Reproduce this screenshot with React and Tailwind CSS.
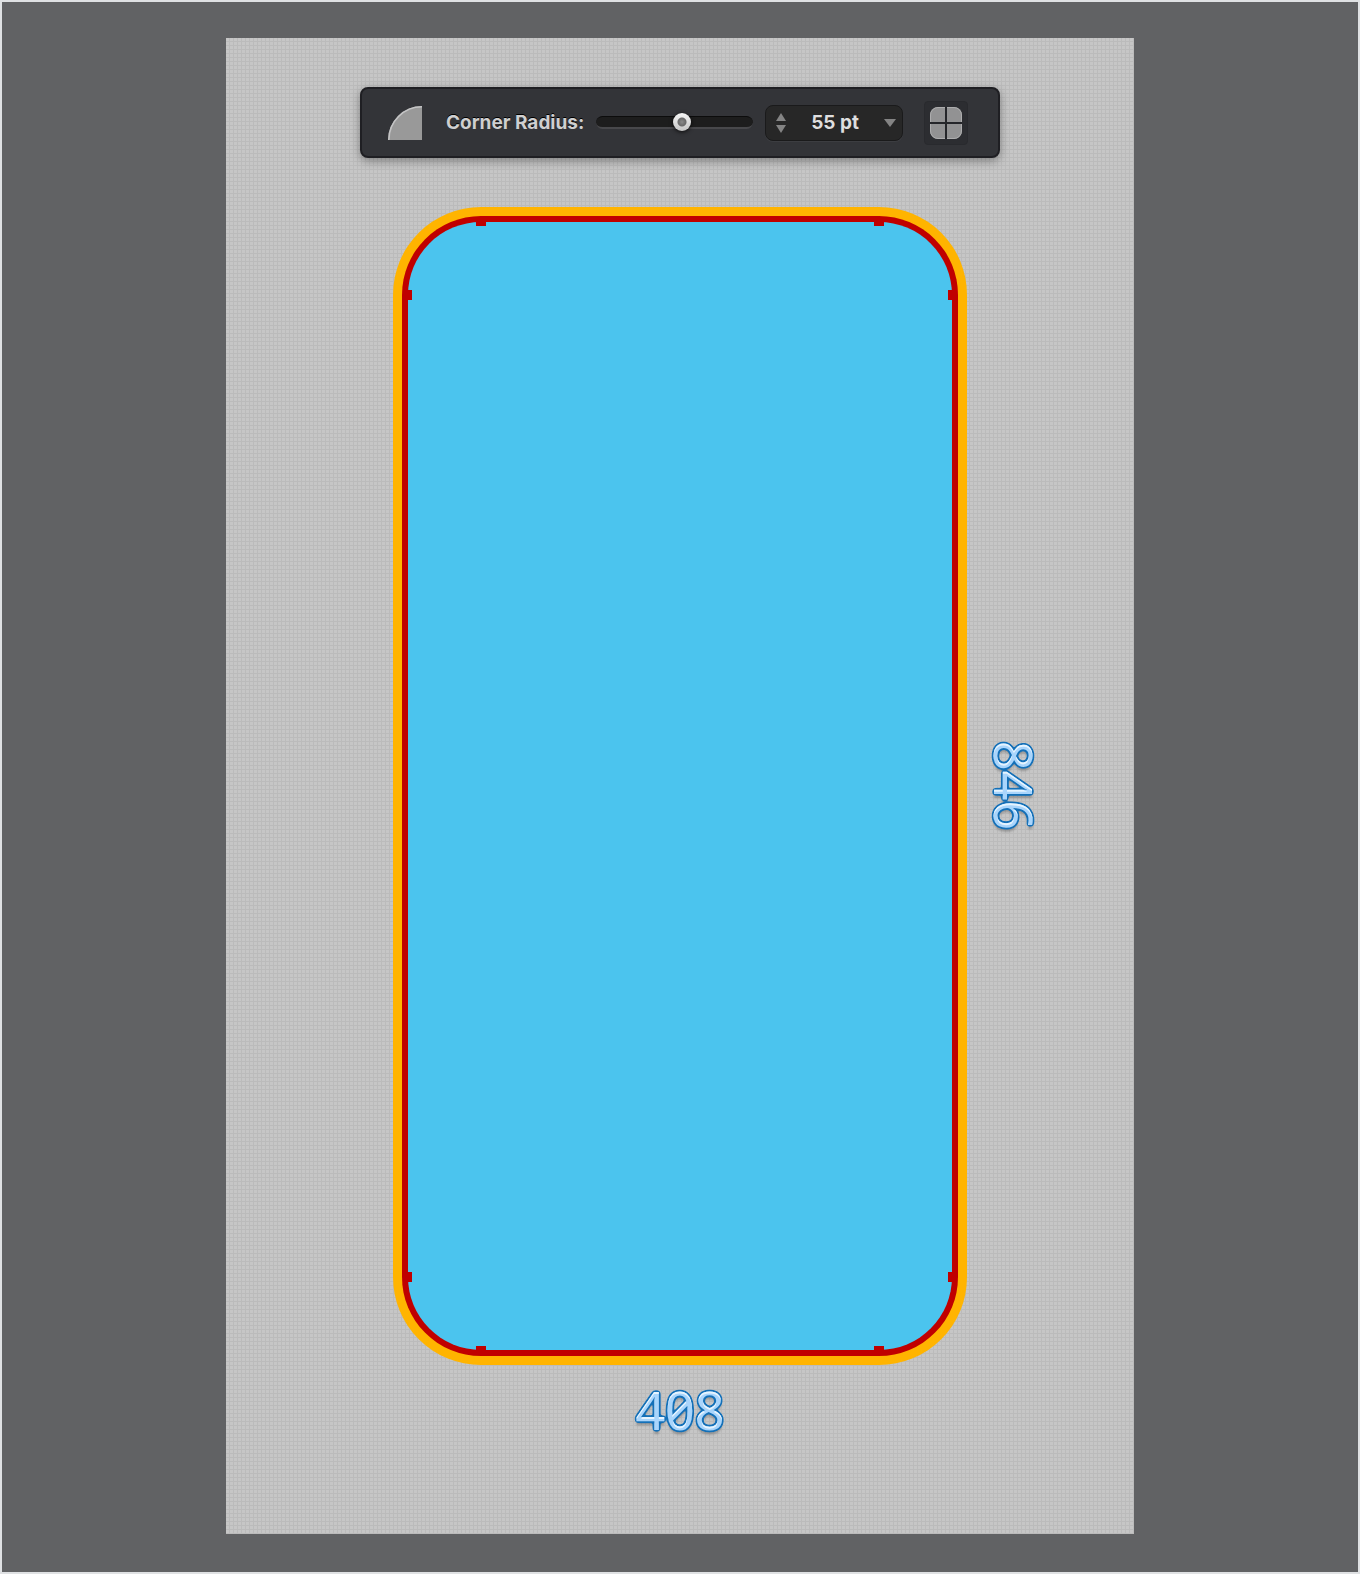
import { useState } from 'react';

const clamp = (n) => Math.min(100, Math.max(0, n));

function GlossFilter() {
  return (
    <svg width="0" height="0" className="absolute" aria-hidden="true">
      <filter id="gloss" x="-20%" y="-20%" width="140%" height="150%" colorInterpolationFilters="sRGB">
        <feOffset in="SourceAlpha" dx="0" dy="4" result="drop" />
        <feGaussianBlur in="drop" stdDeviation="1" result="dropBlur" />
        <feFlood floodColor="#000000" floodOpacity="0.24" />
        <feComposite in2="dropBlur" operator="in" result="shadow" />
        <feGaussianBlur in="SourceAlpha" stdDeviation="1.4" result="soft" />
        <feComponentTransfer in="soft" result="ring">
          <feFuncA type="linear" slope="9" intercept="-0.5" />
        </feComponentTransfer>
        <feFlood floodColor="#1470b8" />
        <feComposite in2="ring" operator="in" result="outline" />
        <feOffset in="SourceAlpha" dx="0" dy="2" result="shifted" />
        <feComposite in="SourceAlpha" in2="shifted" operator="out" result="edge" />
        <feFlood floodColor="#e6f4ff" />
        <feComposite in2="edge" operator="in" result="shine" />
        <feMerge>
          <feMergeNode in="shadow" />
          <feMergeNode in="outline" />
          <feMergeNode in="SourceGraphic" />
          <feMergeNode in="shine" />
        </feMerge>
      </filter>
    </svg>
  );
}

function Dimension({ children, vertical }) {
  return (
    <div className="w-fit [filter:url(#gloss)]">
      <p
        className={`font-['Noto_Sans',sans-serif] text-[52px] leading-[60px] text-[#a9d5fc] [font-feature-settings:'zero'] ${
          vertical ? '[writing-mode:vertical-rl]' : ''
        }`}
      >
        {children}
      </p>
    </div>
  );
}

function Toolbar() {
  const [radius, setRadius] = useState(55);
  return (
    <div className="flex h-[71px] w-[640px] max-w-full items-center rounded-lg border-2 border-[#1f1f23] bg-[#333438] pr-[30px] pl-[26px] font-[Inter,sans-serif] shadow-[0_3px_10px_rgba(0,0,0,0.35)]">
      <svg viewBox="0 0 34 34" className="size-[34px] shrink-0" aria-hidden="true">
        <path d="M0 34A34 34 0 0 1 34 0V34Z" fill="#999999" />
        <path d="M0.8 34A33.2 33.2 0 0 1 34 0.8" fill="none" stroke="#c4c4c5" strokeWidth="1.6" />
      </svg>
      <label
        htmlFor="radius"
        className="ml-6 text-[19px] leading-6 font-bold whitespace-nowrap text-[#cfcfd0] [text-shadow:0_-1px_0_#000]"
      >
        Corner Radius:
      </label>
      <input
        id="radius"
        type="range"
        min="0"
        max="100"
        value={radius}
        onChange={(e) => setRadius(Number(e.target.value))}
        className="mx-3 h-[13px] min-w-0 flex-1 appearance-none rounded-full border-t border-b-2 border-t-[#0c0c0c] border-b-[#48484b] bg-[#1d1d1d] [&::-webkit-slider-thumb]:size-[18px] [&::-webkit-slider-thumb]:appearance-none [&::-webkit-slider-thumb]:rounded-full [&::-webkit-slider-thumb]:bg-[radial-gradient(circle,#8a8a8a_0,#707070_3px,#6a6a6a_4px,transparent_5px),linear-gradient(#f6f6f6,#c4c4c4)] [&::-webkit-slider-thumb]:shadow-[0_1px_4px_rgba(0,0,0,0.8)]"
      />
      <div className="flex h-9 w-[138px] shrink-0 items-center rounded-lg border border-[#1a1a1b] bg-[#272727] pr-1.5 pl-2.5 shadow-[0_1px_0_#3c3d41]">
        <div className="flex flex-col gap-1">
          <button type="button" aria-label="Increase radius" onClick={() => setRadius(clamp(radius + 1))}>
            <svg viewBox="0 0 10 8" className="h-2 w-2.5" aria-hidden="true">
              <path d="M5 0L10 8H0Z" fill="#848484" />
            </svg>
          </button>
          <button type="button" aria-label="Decrease radius" onClick={() => setRadius(clamp(radius - 1))}>
            <svg viewBox="0 0 10 8" className="h-2 w-2.5" aria-hidden="true">
              <path d="M5 8L10 0H0Z" fill="#848484" />
            </svg>
          </button>
        </div>
        <input
          type="text"
          aria-label="Radius value"
          value={`${radius} pt`}
          onChange={(e) => setRadius(clamp(parseInt(e.target.value, 10) || 0))}
          className="min-w-0 flex-1 bg-transparent text-center text-[19px] leading-6 font-bold text-[#dededf]"
        />
        <button type="button" aria-label="Radius presets">
          <svg viewBox="0 0 12 8" className="h-2 w-3" aria-hidden="true">
            <path d="M0 0H12L6 8Z" fill="#848484" />
          </svg>
        </button>
      </div>
      <button
        type="button"
        aria-label="Edit corners"
        className="ml-[21px] flex size-11 shrink-0 items-center justify-center rounded border border-[#292a2e] bg-[#2c2d31]"
      >
        <svg viewBox="0 0 32 32" className="size-8" aria-hidden="true">
          <rect width="32" height="32" rx="8" fill="#929293" />
          <rect x="0.5" y="0.5" width="31" height="31" rx="7.5" fill="none" stroke="#adadae" />
          <path d="M16 0V32M0 16H32" stroke="#25262a" strokeWidth="2" />
        </svg>
      </button>
    </div>
  );
}

const nodes = [
  'left-[68px] top-0 h-1 w-[10px]',
  'right-[68px] top-0 h-1 w-[10px]',
  'left-[68px] bottom-0 h-1 w-[10px]',
  'right-[68px] bottom-0 h-1 w-[10px]',
  'top-[68px] left-0 h-[10px] w-1',
  'top-[68px] right-0 h-[10px] w-1',
  'bottom-[68px] left-0 h-[10px] w-1',
  'bottom-[68px] right-0 h-[10px] w-1',
];

function RoundedShape() {
  return (
    <div className="rounded-[88px] bg-[#ffb400] p-[9px]">
      <div className="h-[1140px] rounded-[79px] bg-[#c00000] p-[6px]">
        <div className="relative h-full rounded-[73px] bg-[#4bc4ee]">
          {nodes.map((place) => (
            <span key={place} className={`absolute bg-[#c00000] ${place}`} />
          ))}
        </div>
      </div>
    </div>
  );
}

export default function App() {
  return (
    <div className="min-h-screen border-2 border-[#dfe1e3] bg-[#616264] px-[224px] pt-9 pb-[38px]">
      <GlossFilter />
      <main className="flex flex-col items-center bg-[#c6c6c6] bg-[linear-gradient(to_right,transparent_3px,#bbbbbb_3px),linear-gradient(to_bottom,transparent_3px,#bbbbbb_3px)] bg-[size:4px_4px] pt-[49px] pb-[94px]">
        <Toolbar />
        <div className="mt-[49px] grid w-full grid-cols-[1fr_574px_1fr] items-center">
          <div className="col-start-2">
            <RoundedShape />
          </div>
          <div className="pl-[17px]">
            <Dimension vertical>846</Dimension>
          </div>
        </div>
        <div className="mt-[15px]">
          <Dimension>408</Dimension>
        </div>
      </main>
    </div>
  );
}
